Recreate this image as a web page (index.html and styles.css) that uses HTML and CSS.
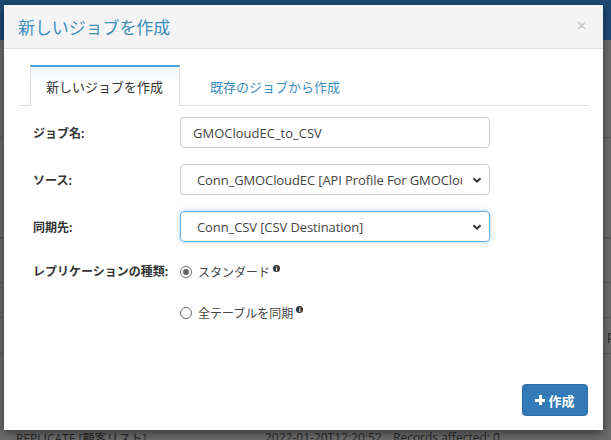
FILE: index.html
```html
<!DOCTYPE html>
<html lang="ja">
<head>
<meta charset="utf-8">
<link rel="stylesheet" href="styles.css">
</head>
<body>
<div class="page">
  <div class="navbar"></div>
  <div class="rows">
    <div class="bg-row r1"></div>
    <div class="bg-row r2"></div>
    <div class="bg-row r3"></div>
    <div class="bg-row r4"></div>
    <div class="bg-row r5"><span class="ghost-p">p</span></div>
    <div class="bg-row r6"></div>
  </div>
  <div class="log-line">
    <span class="log-a">REPLICATE [顧客リスト]</span>
    <span class="log-b">2022-01-20T12:20:52</span>
    <span class="log-c">Records affected: 0</span>
  </div>
</div>

<div class="modal">
  <div class="modal-header">
    <h4 class="modal-title">新しいジョブを作成</h4>
    <span class="close">×</span>
  </div>
  <div class="modal-body">
    <ul class="tabs">
      <li class="tab active">新しいジョブを作成</li>
      <li class="tab">既存のジョブから作成</li>
    </ul>
    <div class="form">
      <div class="form-row">
        <label class="label">ジョブ名:</label>
        <div class="control">GMOCloudEC_to_CSV</div>
      </div>
      <div class="form-row">
        <label class="label">ソース:</label>
        <div class="control select"><span class="val">Conn_GMOCloudEC [API Profile For GMOCloudEC]</span>
          <svg class="chev" viewBox="0 0 10 10" width="10" height="10"><path d="M1.5 3.2 L5 6.7 L8.5 3.2" fill="none" stroke="#333" stroke-width="2"/></svg>
        </div>
      </div>
      <div class="form-row">
        <label class="label">同期先:</label>
        <div class="control select focus"><span class="val">Conn_CSV [CSV Destination]</span>
          <svg class="chev" viewBox="0 0 10 10" width="10" height="10"><path d="M1.5 3.2 L5 6.7 L8.5 3.2" fill="none" stroke="#333" stroke-width="2"/></svg>
        </div>
      </div>
      <div class="form-row radio-row">
        <label class="label">レプリケーションの種類:</label>
        <div class="radios">
          <div class="radio"><span class="circle checked"></span><span class="rtext">スタンダード</span><span class="info">i</span></div>
          <div class="radio"><span class="circle"></span><span class="rtext">全テーブルを同期</span><span class="info">i</span></div>
        </div>
      </div>
    </div>
  </div>
  <div class="modal-footer">
    <button class="btn"><span class="plus"></span>作成</button>
  </div>
</div>
</body>
</html>
```
FILE: styles.css
```css
html, body {
  margin: 0;
  padding: 0;
}
body {
  width: 611px;
  height: 440px;
  overflow: hidden;
  background: #6c6c6c;
  font-family: "Open Sans", "Noto Sans CJK JP", sans-serif;
  position: relative;
}
.page {
  height: 440px;
  display: flex;
  flex-direction: column;
}
.navbar {
  height: 40px;
  background: #1d4a75;
}
.rows {
  flex: 1;
  display: flex;
  flex-direction: column;
}
.bg-row {
  border-bottom: 1px solid #5c5c5c;
  position: relative;
}
.r1 { height: 97px; }
.r2 { height: 99px; border-bottom: 2px solid #5e5e5e; }
.r3 { height: 43px; }
.r4 { height: 34px; }
.r5 { height: 35px; }
.r6 { height: 30px; border: none; }
.ghost-p {
  position: absolute;
  right: -4px;
  top: 9px;
  font-size: 13px;
  line-height: 16px;
  color: #2a2a2a;
}
.log-line {
  height: 8px;
  overflow: visible;
  font-size: 12px;
  color: #262626;
  position: relative;
}
.log-line span {
  position: absolute;
  top: -3px;
  white-space: nowrap;
}
.log-a { left: 16px; }
.log-b { left: 265px; }
.log-c { left: 393px; }

/* modal */
.modal {
  position: absolute;
  left: 4px;
  top: 5px;
  width: 599px;
  height: 425px;
  background: #fff;
  box-shadow: 0 3px 9px rgba(0,0,0,0.5);
  display: flex;
  flex-direction: column;
}
.modal-header {
  height: 43px;
  background: #f4f4f4;
  border-bottom: 1px solid #e2e2e2;
  display: flex;
  align-items: center;
  justify-content: space-between;
  padding: 0 16px 0 14px;
}
.modal-title {
  margin: 0;
  font-weight: normal;
  font-size: 17px;
  color: #3c8dbc;
  letter-spacing: -0.1px;
}
.close {
  font-size: 19px;
  color: #c4c4c4;
  line-height: 1;
  margin-top: -2px;
}
.modal-body {
  flex: 1;
  padding: 16px 15px 0 16px;
}
.tabs {
  list-style: none;
  margin: 0;
  padding: 0 0 0 10px;
  display: flex;
  border-bottom: 1px solid #ddd;
  height: 40px;
  gap: 14px;
}
.tab {
  padding: 0 15px;
  font-size: 13px;
  color: #3c8dbc;
  display: flex;
  align-items: center;
  margin-bottom: -1px;
  border: 1px solid transparent;
  border-top: 2px solid transparent;
}
.tab.active {
  color: #333;
  border-color: #ddd;
  border-top-color: #48a2e0;
  border-bottom-color: #fff;
  background: linear-gradient(#f0f6fb, #fff 40%);
  padding: 1px 16px 0 15px;
}
.form {
  padding: 11px 0 0 13px;
}
.form-row {
  display: grid;
  grid-template-columns: 147px 310px;
  align-items: center;
  margin-bottom: 16px;
}
.label {
  font-size: 12px;
  font-weight: bold;
  color: #333;
}
.control {
  height: 31px;
  box-sizing: border-box;
  border: 1px solid #ccc;
  border-radius: 4px;
  font-size: 13px;
  color: #444;
  padding: 0 12px;
  display: flex;
  align-items: center;
  position: relative;
  white-space: nowrap;
  overflow: hidden;
}
.select {
  padding: 0 27px 0 16px;
  letter-spacing: -0.1px;
}
.val {
  overflow: hidden;
  display: block;
}
.chev {
  position: absolute;
  right: 7px;
  top: 10px;
}
.focus {
  border-color: #66afe9;
  box-shadow: 0 0 5px rgba(102,175,233,0.6);
}
.radio-row {
  align-items: start;
  margin-top: 22px;
}
.radio-row .label {
  line-height: 16px;
}
.radios {
  display: flex;
  flex-direction: column;
  gap: 25px;
}
.radio {
  display: flex;
  align-items: center;
  height: 16px;
  font-size: 12px;
  color: #444;
}
.circle {
  width: 12px;
  height: 12px;
  border: 1px solid #6a6a6a;
  border-radius: 50%;
  margin-right: 6px;
  position: relative;
  box-sizing: border-box;
}
.circle.checked::after {
  content: "";
  position: absolute;
  left: 2px;
  top: 2px;
  width: 6px;
  height: 6px;
  border-radius: 50%;
  background: #666;
}
.info {
  width: 7px;
  height: 7px;
  border-radius: 50%;
  background: #333;
  color: #fff;
  font-size: 6px;
  font-weight: bold;
  line-height: 7px;
  text-align: center;
  font-family: "DejaVu Sans", sans-serif;
  margin: -7px 0 0 3px;
}
.modal-footer {
  display: flex;
  justify-content: flex-end;
  padding: 0 15px 14px 0;
}
.btn {
  height: 32px;
  width: 66px;
  border: 1px solid #2e6da4;
  border-radius: 4px;
  background: #337ab7;
  color: #fff;
  font-family: "Open Sans", "Noto Sans CJK JP", sans-serif;
  font-size: 13px;
  font-weight: bold;
  display: flex;
  align-items: center;
  justify-content: center;
  padding: 0;
}
.plus {
  width: 10px;
  height: 10px;
  position: relative;
  margin-right: 3px;
}
.plus::before, .plus::after {
  content: "";
  position: absolute;
  background: #fff;
}
.plus::before { left: 3.5px; top: 0; width: 3px; height: 10px; }
.plus::after { top: 3.5px; left: 0; width: 10px; height: 3px; }
```
